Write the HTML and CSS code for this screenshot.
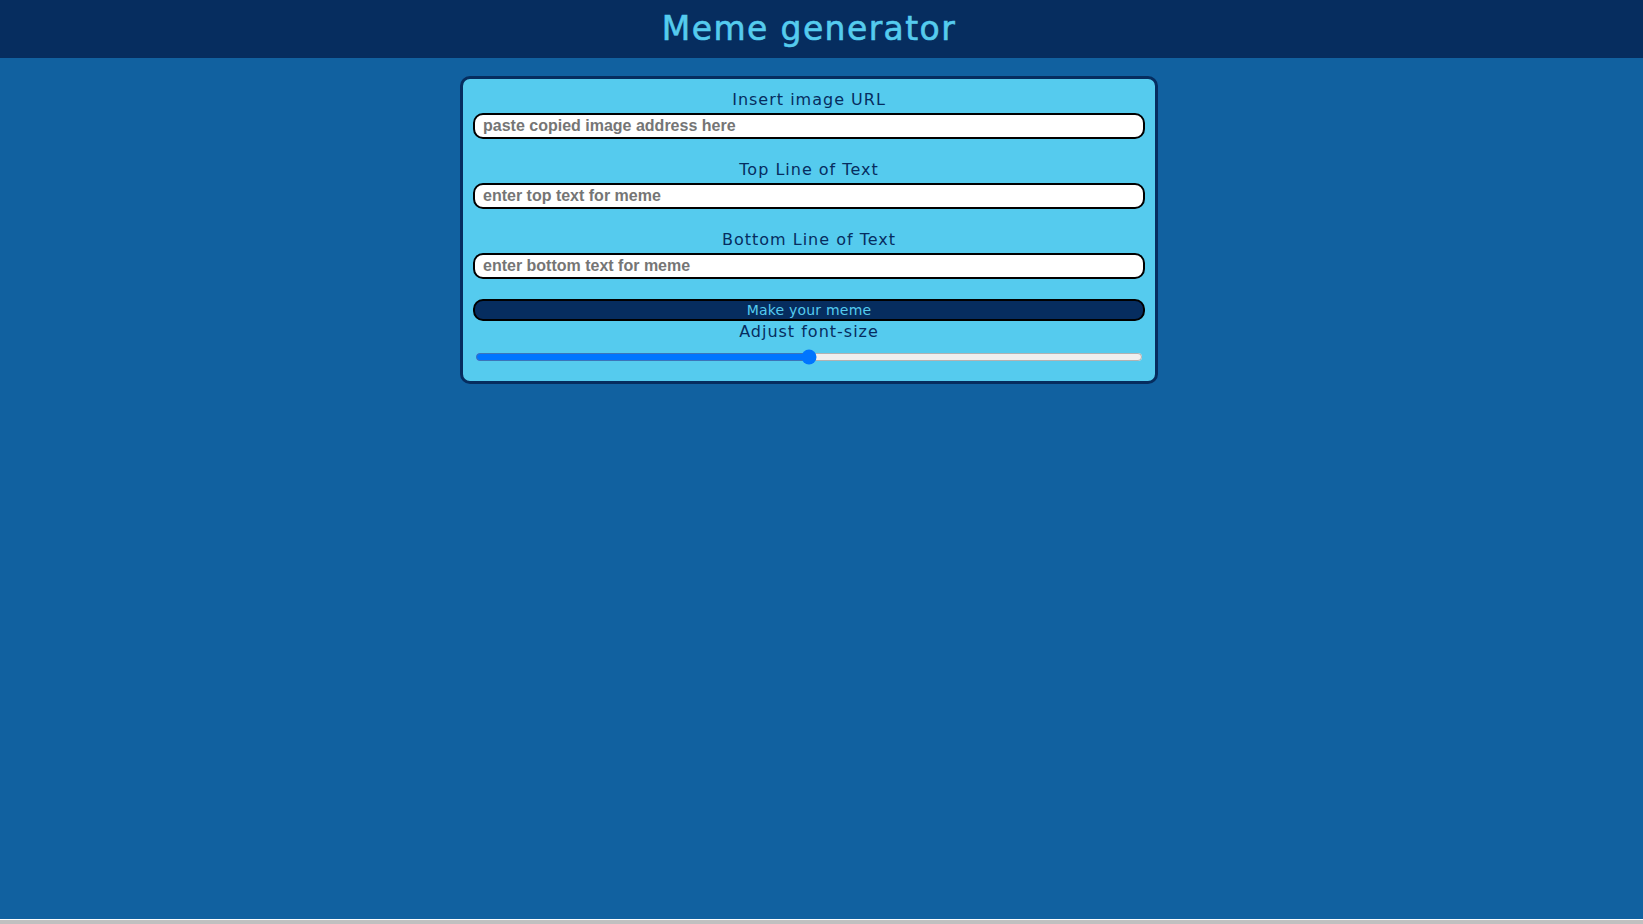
FILE: index.html
```html
<!DOCTYPE html>
<html lang="en">
<head>
  <meta charset="UTF-8">
  <meta name="viewport" content="width=device-width, initial-scale=1">
  <title>Meme generator</title>
  <link rel="stylesheet" href="styles.css">
</head>
<body>
  <div class="page">
    <header class="site-header">
      <h1>Meme generator</h1>
    </header>
    <main class="content">
      <form class="meme-form">
        <label class="field-label" for="imageUrl">Insert image URL</label>
        <input class="text-input" id="imageUrl" type="text" placeholder="paste copied image address here">

        <label class="field-label" for="topText">Top Line of Text</label>
        <input class="text-input" id="topText" type="text" placeholder="enter top text for meme">

        <label class="field-label" for="bottomText">Bottom Line of Text</label>
        <input class="text-input" id="bottomText" type="text" placeholder="enter bottom text for meme">

        <button class="make-button" type="button">Make your meme</button>
        <label class="field-label slider-label" for="fontSize">Adjust font-size</label>
        <input class="size-slider" id="fontSize" type="range" min="0" max="100" value="50">
      </form>
    </main>
  </div>
  <div class="bottom-edge"></div>
</body>
</html>
```

FILE: styles.css
```css
* {
  margin: 0;
  padding: 0;
  box-sizing: border-box;
}
html, body {
  height: 100%;
}
body {
  display: flex;
  flex-direction: column;
  background: #c0c0c0;
  overflow: hidden;
  font-family: "DejaVu Sans", sans-serif;
}
.page {
  flex: 1;
  background: #1161a0;
}
.bottom-edge {
  height: 5px;
  border-top: 1px solid #fff;
}
.site-header {
  height: 58px;
  padding-right: 25px;
  background: #062d5f;
  text-align: center;
}
.site-header h1 {
  font-size: 33px;
  font-weight: normal;
  line-height: 58px;
  letter-spacing: 1.4px;
  color: #55cbee;
  -webkit-text-stroke: 0.6px #55cbee;
}
.content {
  padding-right: 25px;
}
.meme-form {
  display: flex;
  flex-direction: column;
  width: 698px;
  margin: 18px auto 0;
  padding: 9px 10px 11px;
  background: #55cbee;
  border: 3px solid #062d5f;
  border-radius: 10px;
}
.field-label {
  display: block;
  height: 25px;
  margin-top: 19px;
  font-size: 16px;
  line-height: 23px;
  letter-spacing: 1px;
  text-align: center;
  color: #062d5f;
}
.field-label:first-child {
  margin-top: 0;
}
.text-input {
  height: 26px;
  padding: 0 8px;
  background: #fff;
  border: 2px solid #000;
  border-radius: 10px;
  font-family: "Liberation Sans", Arial, sans-serif;
  font-size: 16px;
  font-weight: bold;
}
.make-button {
  height: 22px;
  margin-top: 20px;
  background: #062d5f;
  border: 2px solid #000;
  border-radius: 10px;
  font-family: "DejaVu Sans", sans-serif;
  font-size: 14px;
  letter-spacing: 0.2px;
  color: #55cbee;
}
.slider-label {
  height: 22px;
  margin-top: 0;
  line-height: 21px;
}
.size-slider {
  display: block;
  height: 16px;
  margin: 6px 2px 5px;
}
```
